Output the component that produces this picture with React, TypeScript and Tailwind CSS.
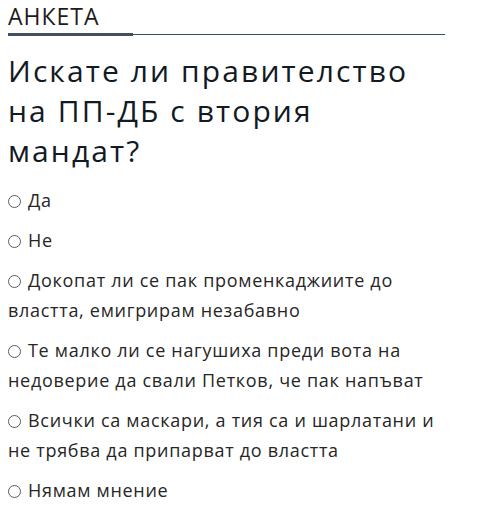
import React from "react";

const options: string[] = [
  "Да",
  "Не",
  "Докопат ли се пак променкаджиите до властта, емигрирам незабавно",
  "Те малко ли се нагушиха преди вота на недоверие да свали Петков, че пак напъват",
  "Всички са маскари, а тия са и шарлатани и не трябва да припарват до властта",
  "Нямам мнение",
];

export default function App() {
  return (
    <div
      className="w-[445px] pl-2 bg-white"
      style={{ fontFamily: '"Open Sans", "Noto Sans", sans-serif' }}
    >
      <div className="pt-[1px]">
        <h2 className="text-[23px] leading-[30px] tracking-[1px] text-[#1c1c1c] font-normal">АНКЕТА</h2>
        <div className="flex items-center mt-[2px]">
          <div className="w-[125px] h-[3px] bg-[#434f5e]" />
          <div className="flex-1 h-[1px] bg-[#35505f]" />
        </div>
      </div>
      <h3 className="mt-[15px] text-[30px] leading-[40px] tracking-[2.1px] text-[#121a24] font-normal">
        Искате ли правителство на ПП-ДБ с втория мандат?
      </h3>
      <div className="mt-[14px] flex flex-col gap-[10px]">
        {options.map((o) => (
          <p key={o} className="text-[18px] leading-[30px] tracking-[0.7px] text-[#262626]">
            <span className="inline-block w-[13px] h-[13px] rounded-full border border-[#5a5a5a] align-[-1px] mr-[7px]" />
            {o}
          </p>
        ))}
      </div>
    </div>
  );
}
